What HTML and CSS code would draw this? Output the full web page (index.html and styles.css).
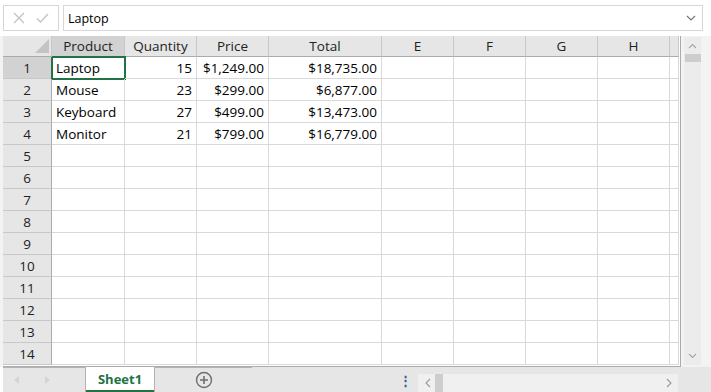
FILE: index.html
```html
<!DOCTYPE html>
<html lang="en">
<head>
    <meta charset="UTF-8">
    <title>Spreadsheet</title>
    <link rel="stylesheet" href="styles.css">
</head>
<body>
    <div class="formula-bar">
        <div class="formula-actions">
            <svg width="12" height="12" viewBox="0 0 12 12"><path d="M1 1 L11 11 M11 1 L1 11" stroke="#c4c4c4" stroke-width="1.4" fill="none"/></svg>
            <svg width="13" height="12" viewBox="0 0 13 12"><path d="M1 6.5 L4.5 10 L12 2" stroke="#c4c4c4" stroke-width="1.4" fill="none"/></svg>
        </div>
        <div class="formula-input">
            <span>Laptop</span>
            <svg width="10" height="6" viewBox="0 0 10 6"><path d="M1 1 L5 5 L9 1" stroke="#777" stroke-width="1.2" fill="none"/></svg>
        </div>
    </div>

    <div class="sheet">
        <div class="grid-wrap">
            <div class="grid">
                <div class="hcell corner"><span class="corner-tri"></span></div>
                <div class="hcell active">Product</div>
                <div class="hcell">Quantity</div>
                <div class="hcell">Price</div>
                <div class="hcell">Total</div>
                <div class="hcell">E</div>
                <div class="hcell">F</div>
                <div class="hcell">G</div>
                <div class="hcell">H</div>
                <div class="hcell"></div>
            </div>
            <div class="grid body" id="rows"></div>
        </div>
        <div class="vscroll">
            <svg class="arrow" width="9" height="6" viewBox="0 0 9 6"><path d="M1 5 L4.5 1.5 L8 5" stroke="#a6a6a6" stroke-width="1.1" fill="none"/></svg>
            <div class="vthumb"></div>
            <div class="spacer"></div>
            <svg class="arrow" width="9" height="6" viewBox="0 0 9 6"><path d="M1 1 L4.5 4.5 L8 1" stroke="#a6a6a6" stroke-width="1.1" fill="none"/></svg>
        </div>
    </div>

    <div class="tabbar">
        <div class="tab-nav">
            <svg width="6" height="8" viewBox="0 0 6 8"><path d="M5 0 L0 4 L5 8 Z" fill="#cfd6de"/></svg>
            <svg width="6" height="8" viewBox="0 0 6 8"><path d="M1 0 L6 4 L1 8 Z" fill="#cfd6de"/></svg>
        </div>
        <div class="tab">Sheet1</div>
        <div class="tab-add">
            <svg width="18" height="18" viewBox="0 0 18 18"><circle cx="9" cy="9" r="7.5" stroke="#6e6e6e" stroke-width="1.4" fill="none"/><path d="M9 5 V13 M5 9 H13" stroke="#6e6e6e" stroke-width="1.6"/></svg>
        </div>
        <div class="dots">&#8942;</div>
        <div class="hscroll">
            <svg width="6" height="10" viewBox="0 0 6 10"><path d="M5 1 L1 5 L5 9" stroke="#9a9a9a" stroke-width="1.1" fill="none"/></svg>
            <div class="hthumb"></div>
            <div class="spacer"></div>
            <svg width="6" height="10" viewBox="0 0 6 10"><path d="M1 1 L5 5 L1 9" stroke="#9a9a9a" stroke-width="1.1" fill="none"/></svg>
        </div>
    </div>

    <script>
        // fill sheet rows
        const data = [
            ['Laptop', '15', '$1,249.00', '$18,735.00'],
            ['Mouse', '23', '$299.00', '$6,877.00'],
            ['Keyboard', '27', '$499.00', '$13,473.00'],
            ['Monitor', '21', '$799.00', '$16,779.00']
        ];
        const rows = document.getElementById('rows');
        for (let r = 0; r < 14; r++) {
            const num = document.createElement('div');
            num.className = 'rcell' + (r === 0 ? ' active' : '');
            num.textContent = r + 1;
            rows.appendChild(num);
            for (let c = 0; c < 9; c++) {
                const cell = document.createElement('div');
                cell.className = 'cell';
                const row = data[r];
                if (row && c < 4) {
                    cell.textContent = row[c];
                    if (c > 0) cell.classList.add('num');
                }
                if (r === 0 && c === 0) cell.classList.add('selected');
                rows.appendChild(cell);
            }
        }
    </script>
</body>
</html>
```

FILE: styles.css
```css
body {
    margin: 0;
    font-family: "Open Sans", "Noto Sans", sans-serif;
    background-color: #ffffff;
    color: #000;
}
.formula-bar {
    display: flex;
    gap: 4px;
    padding: 5px 8px 0 3px;
    height: 26px;
}
.formula-actions {
    width: 56px;
    box-sizing: border-box;
    border: 1px solid #d6d6d6;
    display: flex;
    align-items: center;
    justify-content: space-around;
    padding: 0 4px;
}
.formula-input {
    flex: 1;
    box-sizing: border-box;
    border: 1px solid #d6d6d6;
    display: flex;
    align-items: center;
    justify-content: space-between;
    padding: 0 6px 0 4px;
    font-size: 12.5px;
    color: #000;
}
.sheet {
    display: flex;
    margin-top: 5px;
    padding-left: 3px;
    background-color: #f3f3f3;
    height: 331px;
}
.grid-wrap {
    width: 677px;
    background-color: #fff;
    border-right: 1px solid #ababab;
    border-bottom: 1px solid #ababab;
    overflow: hidden;
}
.grid {
    display: grid;
    grid-template-columns: 49px 73px 72px 72px 113px 72px 72px 72px 72px 9px;
    font-size: 13.5px;
}
.hcell {
    height: 21px;
    box-sizing: border-box;
    background-color: #e6e6e6;
    border-right: 1px solid #c8c8c8;
    border-bottom: 1px solid #ababab;
    display: flex;
    align-items: center;
    justify-content: center;
    color: #222;
}
.hcell.active {
    background-color: #d2d2d2;
}
.corner {
    position: relative;
}
.corner-tri {
    position: absolute;
    right: 2px;
    bottom: 3px;
    width: 0;
    height: 0;
    border-left: 14px solid transparent;
    border-bottom: 14px solid #c3c3c3;
}
.rcell {
    height: 22px;
    box-sizing: border-box;
    background-color: #e6e6e6;
    border-right: 1px solid #ababab;
    border-bottom: 1px solid #c8c8c8;
    display: flex;
    align-items: center;
    justify-content: center;
    color: #222;
}
.rcell.active {
    background-color: #d2d2d2;
}
.cell {
    height: 22px;
    box-sizing: border-box;
    border-right: 1px solid #d9d9d9;
    border-bottom: 1px solid #d9d9d9;
    display: flex;
    align-items: center;
    padding: 0 4px;
    white-space: nowrap;
    overflow: hidden;
    color: #000;
}
.cell.num {
    justify-content: flex-end;
}
.cell.selected {
    outline: 2px solid #217346;
    outline-offset: -1px;
}
.vscroll {
    width: 17px;
    margin: 1px 0 0 3px;
    height: 328px;
    background-color: #ececec;
    display: flex;
    flex-direction: column;
    align-items: center;
}
.vscroll .arrow {
    margin: 6px 0;
}
.vthumb {
    width: 16px;
    height: 8px;
    background-color: #cdcdcd;
    margin-top: -1px;
}
.spacer {
    flex: 1;
}
.tabbar {
    display: flex;
    align-items: stretch;
    height: 25px;
    margin-left: 3px;
    background-color: #e6e6e6;
    font-size: 13px;
}
.tab-nav {
    width: 83px;
    box-sizing: border-box;
    border-top: 1px solid #b4b4b4;
    border-right: 1px solid #b4b4b4;
    display: flex;
    align-items: center;
    gap: 24px;
    padding-left: 11px;
}
.tab {
    width: 68px;
    background-color: #fff;
    border-bottom: 2px solid #217346;
    box-sizing: border-box;
    display: flex;
    align-items: center;
    justify-content: center;
    font-weight: bold;
    color: #217346;
}
.tab-add {
    width: 98px;
    box-sizing: border-box;
    border-top: 1px solid #b4b4b4;
    border-left: 1px solid #b4b4b4;
    display: flex;
    align-items: center;
    justify-content: center;
}
.dots {
    width: 166px;
    box-sizing: border-box;
    display: flex;
    align-items: center;
    justify-content: flex-end;
    padding-right: 6px;
    font-weight: bold;
    color: #2c5f9e;
}
.hscroll {
    width: 260px;
    margin-top: 7px;
    background-color: #f0f0f0;
    display: flex;
    align-items: center;
    padding: 0 6px 0 7px;
    box-sizing: border-box;
}
.hthumb {
    width: 8px;
    height: 100%;
    background-color: #cdcdcd;
    margin-left: 4px;
}
```
